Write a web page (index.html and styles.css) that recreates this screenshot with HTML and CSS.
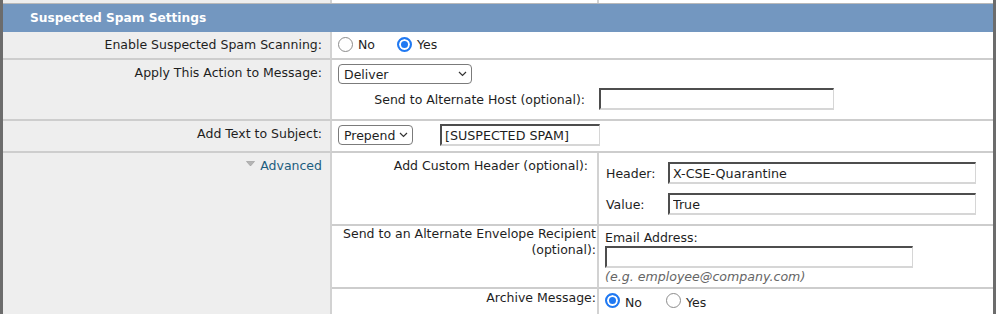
FILE: index.html
```html
<!DOCTYPE html>
<html lang="en">
  <head>
    <meta charset="utf-8" />
    <title>Suspected Spam Settings</title>
    <link rel="stylesheet" href="styles.css">
  </head>

  <body>
    <div class="panel">
      <!-- tail of the previous table row -->
      <div class="prev-row">
        <div class="prev-label"></div>
        <div class="prev-field">
          <div class="prev-sub"></div>
          <div class="prev-sub"></div>
        </div>
      </div>

      <div class="section-title">Suspected Spam Settings</div>

      <div class="settings">
        <div class="label">Enable Suspected Spam Scanning:</div>
        <div class="field field-radios">
          <label class="radio"><input type="radio" name="scan" /> No</label>
          <label class="radio"><input type="radio" name="scan" checked /> Yes</label>
        </div>

        <div class="label">Apply This Action to Message:</div>
        <div class="field field-action">
          <span class="select-wrap select-deliver">
            <select>
              <option>Deliver</option>
              <option>Drop</option>
              <option>Bounce</option>
            </select>
            <svg class="chevron" width="9" height="6" viewBox="0 0 9 6"><polyline points="1,1 4.5,4.5 8,1" /></svg>
          </span>
          <div class="alt-host">
            <span class="alt-host-label">Send to Alternate Host (optional):</span>
            <input type="text" class="text-input input-host" />
          </div>
        </div>

        <div class="label">Add Text to Subject:</div>
        <div class="field field-subject">
          <span class="select-wrap select-prepend">
            <select>
              <option>Prepend</option>
              <option>Append</option>
            </select>
            <svg class="chevron" width="9" height="6" viewBox="0 0 9 6"><polyline points="1,1 4.5,4.5 8,1" /></svg>
          </span>
          <input type="text" class="text-input input-subject" value="[SUSPECTED SPAM]" />
        </div>

        <div class="label label-last">
          <a class="advanced-toggle" href="#">
            <svg width="9" height="6" viewBox="0 0 9 6"><polygon points="0.5,0.5 8.5,0.5 4.5,5" /></svg>
            Advanced
          </a>
        </div>
        <div class="field field-nested">
          <div class="sub">
            <div class="sub-label sub-label-header">Add Custom Header (optional):</div>
            <div class="sub-field header-fields">
              <span>Header:</span>
              <input type="text" class="text-input input-wide" value="X-CSE-Quarantine" />
              <span>Value:</span>
              <input type="text" class="text-input input-wide" value="True" />
            </div>

            <div class="sub-label sub-label-envelope">Send to an Alternate Envelope Recipient<br />(optional):</div>
            <div class="sub-field envelope-fields">
              <div>Email Address:</div>
              <input type="text" class="text-input input-wide" />
              <div class="hint">(e.g. employee@company.com)</div>
            </div>

            <div class="sub-label sub-last">Archive Message:</div>
            <div class="sub-field sub-last field-radios archive-radios">
              <label class="radio"><input type="radio" name="archive" checked /> No</label>
              <label class="radio"><input type="radio" name="archive" /> Yes</label>
            </div>
          </div>
        </div>
      </div>
    </div>
  </body>
</html>
```

FILE: styles.css
```css
html {
  font-family: "DejaVu Sans", Verdana, sans-serif;
  font-size: 12.5px;
  color: #1e1e1e;
}

body {
  margin: 0;
  background: #fff;
}

.panel {
  width: 996px;
  box-sizing: border-box;
  border-left: 3px solid #6c6c6c;
  border-right: 3px solid #6c6c6c;
}

.prev-row {
  display: grid;
  grid-template-columns: 327px 1fr;
  height: 4px;
  box-sizing: border-box;
  border-bottom: 1px solid #b9b9b9;
}
.prev-label {
  background: #eeeeee;
}
.prev-field {
  display: grid;
  grid-template-columns: 265px 1fr;
  border-left: 2px solid #d2d2d2;
}
.prev-sub + .prev-sub {
  border-left: 2px solid #d2d2d2;
}

.section-title {
  height: 28px;
  line-height: 28px;
  padding-left: 27px;
  background: #7397c0;
  color: #fff;
  font-weight: bold;
  font-size: 12.2px;
}

.settings {
  display: grid;
  grid-template-columns: 327px 1fr;
  grid-template-rows: 28px 61px 32px auto;
}

.label {
  background: #eeeeee;
  text-align: right;
  padding: 5px 8px 0 0;
  line-height: 15px;
  border-bottom: 2px solid #cdcdcd;
  box-sizing: border-box;
}
.label-last {
  display: flex;
  justify-content: flex-end;
  align-items: flex-start;
  padding-top: 5px;
  border-bottom: none;
}

.field {
  border-left: 2px solid #d2d2d2;
  border-bottom: 2px solid #cdcdcd;
  padding-left: 6px;
  box-sizing: border-box;
}

.field-radios {
  display: flex;
  align-items: center;
  padding-bottom: 1px;
}

.radio {
  display: inline-flex;
  align-items: center;
  gap: 5px;
  margin-right: 22px;
  line-height: 15px;
}
.radio input {
  appearance: none;
  width: 15px;
  height: 15px;
  margin: 0;
  border: 1px solid #8c8c8c;
  border-radius: 50%;
  background: #fff;
  box-sizing: border-box;
}
.radio input:checked {
  border: 2px solid #2079f2;
  background: #2079f2;
  box-shadow: inset 0 0 0 2px #fff;
}

.select-wrap {
  position: relative;
  display: inline-block;
}
.select-wrap select {
  appearance: none;
  height: 20px;
  margin: 0;
  padding: 0 0 0 5px;
  border: 1px solid #7b7b7b;
  border-radius: 4px;
  background: #fff;
  font-family: inherit;
  font-size: 12.5px;
  color: #1e1e1e;
  box-sizing: border-box;
  display: block;
}
.select-deliver select {
  width: 134px;
}
.select-prepend select {
  width: 75px;
}
.chevron {
  position: absolute;
  right: 5px;
  top: 7px;
  fill: none;
  stroke: #333;
  stroke-width: 1.2;
  pointer-events: none;
}

.text-input {
  height: 22px;
  margin: 0;
  padding: 0 3px;
  border-style: solid;
  border-width: 2px 1px 2px 2px;
  border-color: #4d4d4d #d6d6d6 #d6d6d6 #4d4d4d;
  background: #fff;
  font-family: inherit;
  font-size: 12.7px;
  color: #1e1e1e;
  box-sizing: border-box;
  display: block;
}

.field-action {
  padding-top: 4px;
}
.alt-host {
  display: flex;
  align-items: center;
  margin-top: 4px;
  gap: 14px;
}
.alt-host-label {
  width: 247px;
  text-align: right;
}
.input-host {
  width: 235px;
}

.field-subject {
  display: flex;
  align-items: center;
  gap: 27px;
  padding-bottom: 2px;
}
.input-subject {
  width: 160px;
}

.advanced-toggle {
  display: flex;
  align-items: center;
  gap: 5px;
  line-height: 15px;
  color: #1d5d7e;
  text-decoration: none;
}
.advanced-toggle svg {
  fill: #b4b4b4;
  stroke: #999;
  stroke-width: 0.6;
  margin-top: -3px;
}

.field-nested {
  padding-left: 0;
  border-bottom: none;
}

.sub {
  display: grid;
  grid-template-columns: 265px 1fr;
  grid-template-rows: 73px 63px 30px;
}

.sub-label {
  text-align: right;
  padding: 1px 1px 0 0;
  line-height: 15px;
  border-bottom: 2px solid #cdcdcd;
  box-sizing: border-box;
}
.sub-label-header {
  padding: 5px 9px 0 0;
}
.sub-label-envelope {
  padding-top: 0;
  line-height: 16px;
}

.sub-field {
  border-left: 2px solid #d2d2d2;
  border-bottom: 2px solid #cdcdcd;
  padding-left: 6px;
  box-sizing: border-box;
}
.sub-last {
  border-bottom: none;
}

.header-fields {
  display: grid;
  grid-template-columns: 63px 308px;
  align-items: center;
  row-gap: 9px;
  padding-top: 9px;
  align-content: start;
}
.header-fields span {
  padding-left: 1px;
}
.input-wide {
  width: 308px;
}

.envelope-fields {
  padding-top: 4px;
  line-height: 15px;
}
.envelope-fields .text-input {
  margin-top: 1px;
}
.hint {
  font-style: italic;
  font-size: 12.6px;
  color: #666;
  margin-top: 1px;
}

.archive-radios {
  align-items: flex-start;
  padding-top: 4px;
}
.archive-radios .radio {
  margin-right: 24px;
  line-height: 19px;
  align-items: flex-start;
}
.archive-radios .radio input {
  margin-top: 0;
}
```
